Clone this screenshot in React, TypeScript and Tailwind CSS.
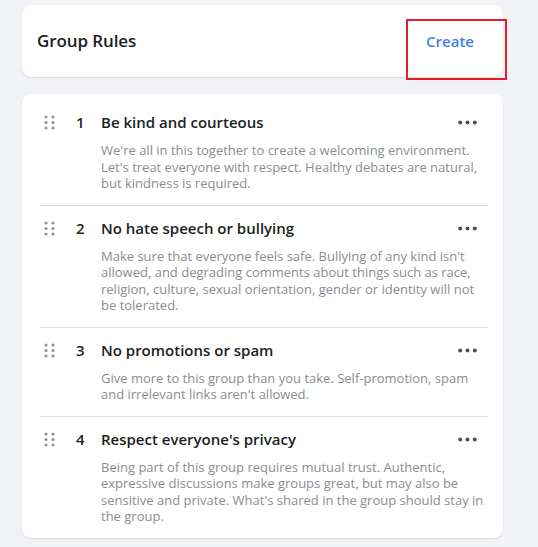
/**
 * Group Rules 관리 화면
 */

const rules = [
  {
    id: 1,
    title: 'Be kind and courteous',
    body: "We're all in this together to create a welcoming environment. Let's treat everyone with respect. Healthy debates are natural, but kindness is required.",
  },
  {
    id: 2,
    title: 'No hate speech or bullying',
    body: "Make sure that everyone feels safe. Bullying of any kind isn't allowed, and degrading comments about things such as race, religion, culture, sexual orientation, gender or identity will not be tolerated.",
  },
  {
    id: 3,
    title: 'No promotions or spam',
    body: "Give more to this group than you take. Self-promotion, spam and irrelevant links aren't allowed.",
  },
  {
    id: 4,
    title: "Respect everyone's privacy",
    body: "Being part of this group requires mutual trust. Authentic, expressive discussions make groups great, but may also be sensitive and private. What's shared in the group should stay in the group.",
  },
];

function GripIcon() {
  return (
    <svg width="12" height="15" viewBox="0 0 12 15" fill="#8d949e">
      <circle cx="2" cy="2" r="1.6" />
      <circle cx="9" cy="2" r="1.6" />
      <circle cx="2" cy="7.5" r="1.6" />
      <circle cx="9" cy="7.5" r="1.6" />
      <circle cx="2" cy="13" r="1.6" />
      <circle cx="9" cy="13" r="1.6" />
    </svg>
  );
}

function MoreIcon() {
  return (
    <svg width="19" height="5" viewBox="0 0 19 5" fill="#4b4f56">
      <circle cx="2.2" cy="2.5" r="2" />
      <circle cx="9.5" cy="2.5" r="2" />
      <circle cx="16.8" cy="2.5" r="2" />
    </svg>
  );
}

export default function App() {
  return (
    <div
      className="relative w-[538px] h-[547px] bg-[#f0f2f5] pl-[22px] pt-[5px] overflow-hidden"
      style={{ fontFamily: '"Open Sans", "Noto Sans", sans-serif' }}
    >
      {/* 상단 헤더 카드 */}
      <div className="w-[481px] h-[72px] bg-white rounded-[9px] shadow-[0_1px_2px_rgba(0,0,0,0.1)] flex items-center justify-between pl-[15px] pr-[29px]">
        <h2 className="text-[17px] font-semibold text-[#1c1e21] tracking-[-0.1px]">Group Rules</h2>
        <button type="button" className="text-[15px] font-semibold text-[#3f7fe6]">
          Create
        </button>
      </div>

      {/* 강조 표시 박스 */}
      <div className="absolute left-[406px] top-[19px] w-[101px] h-[61px] border-[2.5px] border-[#e3202a]" />

      {/* 규칙 목록 카드 */}
      <div className="mt-[17px] w-[481px] bg-white rounded-[9px] shadow-[0_1px_2px_rgba(0,0,0,0.1)] pl-[18px] pr-[15px] pt-[6px]">
        {rules.map((rule, i) => (
          <div
            key={rule.id}
            className={`flex pt-[12px] ${i < rules.length - 1 ? 'pb-[13px] border-b border-[#dadde1]' : 'pb-[13px]'}`}
          >
            <div className="w-[30px] pl-[4px] pt-[3px] shrink-0">
              <GripIcon />
            </div>
            <div className="w-[31px] pl-[6px] shrink-0 text-[15px] leading-[20px] font-semibold text-[#1c1e21]">
              {rule.id}
            </div>
            <div className="flex-1 min-w-0 pr-[3px]">
              <div className="flex items-start justify-between">
                <div className="text-[15px] leading-[20px] font-semibold text-[#1c1e21]">{rule.title}</div>
                <div className="pt-[8px] pr-[8px] h-[13px]">
                  <MoreIcon />
                </div>
              </div>
              <p className="mt-[10px] text-[13px] leading-[16.5px] text-[#8a8d91]">{rule.body}</p>
            </div>
          </div>
        ))}
      </div>
    </div>
  );
}
